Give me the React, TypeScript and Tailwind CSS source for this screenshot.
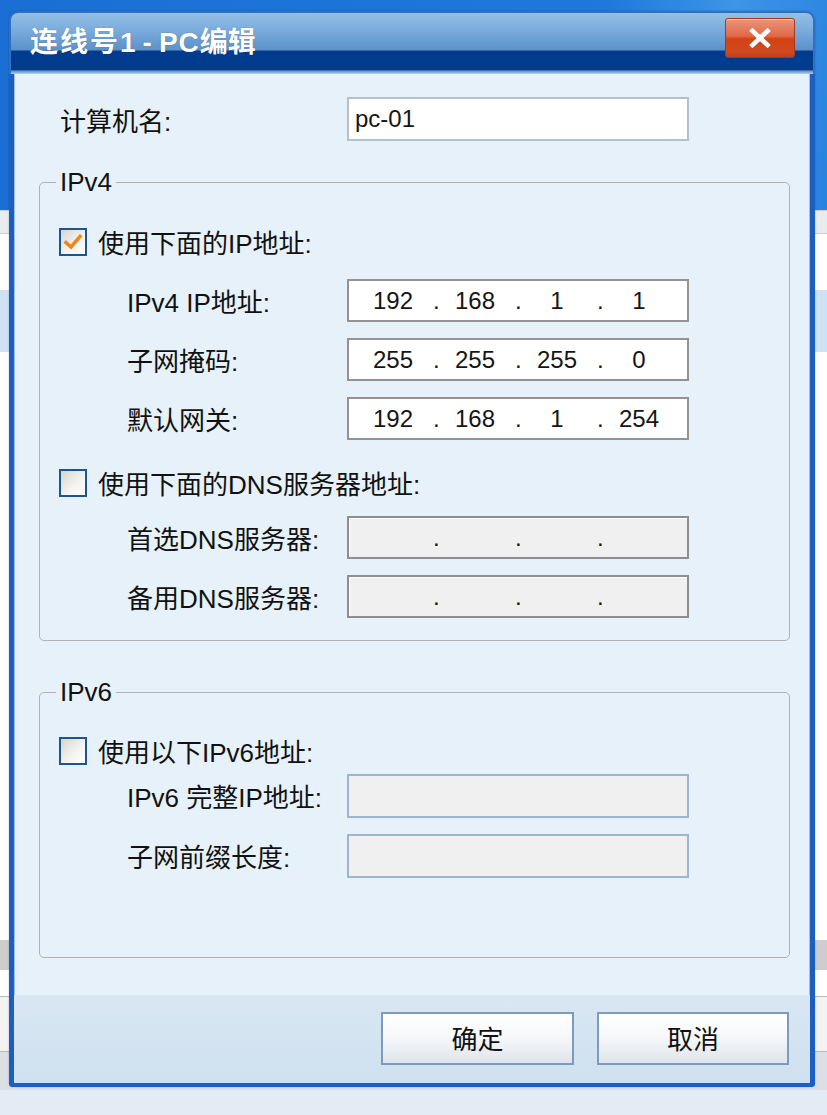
import React, { Fragment } from "react";

const FONT = "font-['Liberation_Sans','Noto_Sans_CJK_SC',sans-serif]";

function CheckBox({ checked }: { checked?: boolean }) {
  return (
    <div className="flex h-[28px] w-[28px] shrink-0 items-center justify-center border-2 border-[#1f5689] bg-[linear-gradient(135deg,#d6d6d0_0%,#f4f4f2_60%,#ffffff_100%)]">
      {checked && (
        <svg width="22" height="22" viewBox="0 0 22 22">
          <path d="M4 11.5 L9 16 L18 5.5" fill="none" stroke="#f0871a" strokeWidth="3.6" strokeLinecap="square" strokeLinejoin="miter" />
        </svg>
      )}
    </div>
  );
}

function IpBox({ parts, disabled }: { parts: string[]; disabled?: boolean }) {
  return (
    <div
      className={`flex h-[43px] w-[342px] items-center border-2 pl-[7px] text-[24px] text-[#151515] ${
        disabled
          ? "border-[#8e8e8e] bg-[#f0f0f0] shadow-[inset_1px_1px_0_#ffffff]"
          : "border-[#939393] bg-white"
      }`}
    >
      {parts.map((p, i) => (
        <Fragment key={i}>
          <span className="w-[74px] text-center">{p}</span>
          {i < 3 && <span className="w-[8px] pl-[3px] text-left">.</span>}
        </Fragment>
      ))}
    </div>
  );
}

function Row({ label, children, first }: { label: string; children: React.ReactNode; first?: boolean }) {
  return (
    <div className={`flex items-center pl-[68px] ${first ? "" : "mt-[16px]"}`}>
      <div className="w-[220px] pt-[4px] text-[26px] leading-none text-[#111]">{label}</div>
      {children}
    </div>
  );
}

function CheckRow({ label, checked, mt }: { label: string; checked?: boolean; mt: string }) {
  return (
    <div className={`flex h-[30px] items-center gap-[11px] ${mt}`}>
      <CheckBox checked={checked} />
      <span className="pt-[4px] text-[26px] leading-none text-[#111]">{label}</span>
    </div>
  );
}

function Backdrop() {
  return (
    <div className="flex h-full w-full flex-col">
      <div className="h-[210px] bg-[linear-gradient(100deg,#1b6fd4_0%,#1f78da_70%,#3c95e6_85%,#2a82df_100%)]" />
      <div className="h-[24px] border-y border-[#c9cfd6] bg-[#e9ecef]" />
      <div className="h-[56px] bg-white" />
      <div className="h-[62px] bg-[#cfe1f4]" />
      <div className="h-[588px] bg-white" />
      <div className="h-[30px] bg-[#cdcdcd]" />
      <div className="h-[26px] bg-white" />
      <div className="h-[56px] border-y border-[#b9b9b9] bg-[#f3f3f3]" />
      <div className="h-[38px] bg-[#dcdfe3]" />
      <div className="flex-1 bg-[#e3ecf5]" />
    </div>
  );
}

export default function App() {
  return (
    <div className={`relative h-[1115px] w-[827px] overflow-hidden bg-[#e3ecf5] ${FONT}`}>
      <Backdrop />

      {/* dialog window */}
      <div className="absolute left-[9px] top-[11px] flex h-[1076px] w-[806px] flex-col overflow-hidden rounded-t-[9px] rounded-b-[4px] shadow-[0_0_2px_rgba(0,0,0,0.25)]">
        {/* title bar */}
        <div className="flex h-[63px] shrink-0 items-center justify-between rounded-t-[9px] border-x-2 border-t-2 border-[#2f6fc4] bg-[linear-gradient(to_bottom,#93c0e7_0%,#79aadb_30%,#5b90c9_61%,#003b8e_62%,#023c8d_93%,#5f91cf_95%,#b6d0ea_100%)] pl-[19px] pr-[18px]">
          <div className="mb-[2px] flex items-center text-[28px] font-bold leading-none text-white [text-shadow:0_0_1px_rgba(0,0,0,0.4)]">
            <span className="tracking-[2px]">连线号</span>
            <span>1</span>
            <span className="mx-[7px]">-</span>
            <span className="tracking-[1px]">PC</span>
            <span>编辑</span>
          </div>
          <div className="mb-[11px] flex h-[40px] w-[70px] items-center justify-center rounded-[3px] border border-[#a6391c] bg-[linear-gradient(to_bottom,#eb9578_0%,#e0694a_45%,#d44112_52%,#cf4a20_85%,#c2401a_100%)] shadow-[inset_0_1px_0_rgba(255,255,255,0.45)]">
            <svg width="22" height="20" viewBox="0 0 22 20">
              <path d="M3.5 3 L18.5 17 M18.5 3 L3.5 17" stroke="#ffffff" strokeWidth="4.6" strokeLinecap="square" />
            </svg>
          </div>
        </div>

        {/* body with blue border */}
        <div className="flex flex-1 flex-col border-x-[5px] border-b-[4px] border-[#1c5ec4]">
          <div className="flex flex-1 flex-col bg-[#e7f1f9] pl-[25px] pr-[20px] pt-[23px] shadow-[inset_1px_0_0_#9fc2ea,inset_-1px_0_0_#9fc2ea]">
            {/* computer name */}
            <div className="flex h-[44px] items-center pl-[21px]">
              <div className="w-[287px] pt-[6px] text-[26px] leading-none text-[#111]">计算机名:</div>
              <div className="flex h-[44px] w-[342px] items-center border-2 border-[#b3c0cd] bg-white pl-[6px] text-[24px] text-[#151515]">
                pc-01
              </div>
            </div>

            {/* IPv4 group */}
            <fieldset className="mt-[26px] w-[751px] rounded-[5px] border border-[#b2b2b2] pb-[22px] pl-[19px]">
              <legend className="-ml-[3px] px-[4px] text-[26px] leading-[30px] text-[#111]">IPv4</legend>
              <CheckRow label="使用下面的IP地址:" checked mt="mt-[30px]" />
              <div className="mt-[22px]">
                <Row label="IPv4 IP地址:" first>
                  <IpBox parts={["192", "168", "1", "1"]} />
                </Row>
                <Row label="子网掩码:">
                  <IpBox parts={["255", "255", "255", "0"]} />
                </Row>
                <Row label="默认网关:">
                  <IpBox parts={["192", "168", "1", "254"]} />
                </Row>
              </div>
              <CheckRow label="使用下面的DNS服务器地址:" mt="mt-[28px]" />
              <div className="mt-[18px]">
                <Row label="首选DNS服务器:" first>
                  <IpBox parts={["", "", "", ""]} disabled />
                </Row>
                <Row label="备用DNS服务器:">
                  <IpBox parts={["", "", "", ""]} disabled />
                </Row>
              </div>
            </fieldset>

            {/* IPv6 group */}
            <fieldset className="mt-[36px] w-[751px] rounded-[5px] border border-[#b2b2b2] pb-[79px] pl-[19px]">
              <legend className="-ml-[3px] px-[4px] text-[26px] leading-[30px] text-[#111]">IPv6</legend>
              <CheckRow label="使用以下IPv6地址:" mt="mt-[29px]" />
              <div className="mt-[8px]">
                <Row label="IPv6 完整IP地址:" first>
                  <div className="h-[44px] w-[342px] border-2 border-[#9bb6d2] bg-[#f0f0f0]" />
                </Row>
                <Row label="子网前缀长度:">
                  <div className="h-[44px] w-[342px] border-2 border-[#9bb6d2] bg-[#f0f0f0]" />
                </Row>
              </div>
            </fieldset>
          </div>

          {/* footer */}
          <div className="flex h-[88px] shrink-0 justify-end gap-[23px] bg-[linear-gradient(to_bottom,#d9e7f3_0%,#cfe0ef_100%)] pr-[21px] pt-[17px]">
            <button className="flex h-[53px] w-[193px] items-center justify-center border-2 border-[#7b9cbc] bg-[linear-gradient(to_bottom,#ffffff_0%,#f7f8fa_45%,#dfe5eb_100%)] pt-[3px] text-[26px] leading-none text-[#111]">
              确定
            </button>
            <button className="flex h-[53px] w-[192px] items-center justify-center border-2 border-[#7b9cbc] bg-[linear-gradient(to_bottom,#ffffff_0%,#f7f8fa_45%,#dfe5eb_100%)] pt-[3px] text-[26px] leading-none text-[#111]">
              取消
            </button>
          </div>
        </div>
      </div>
    </div>
  );
}
